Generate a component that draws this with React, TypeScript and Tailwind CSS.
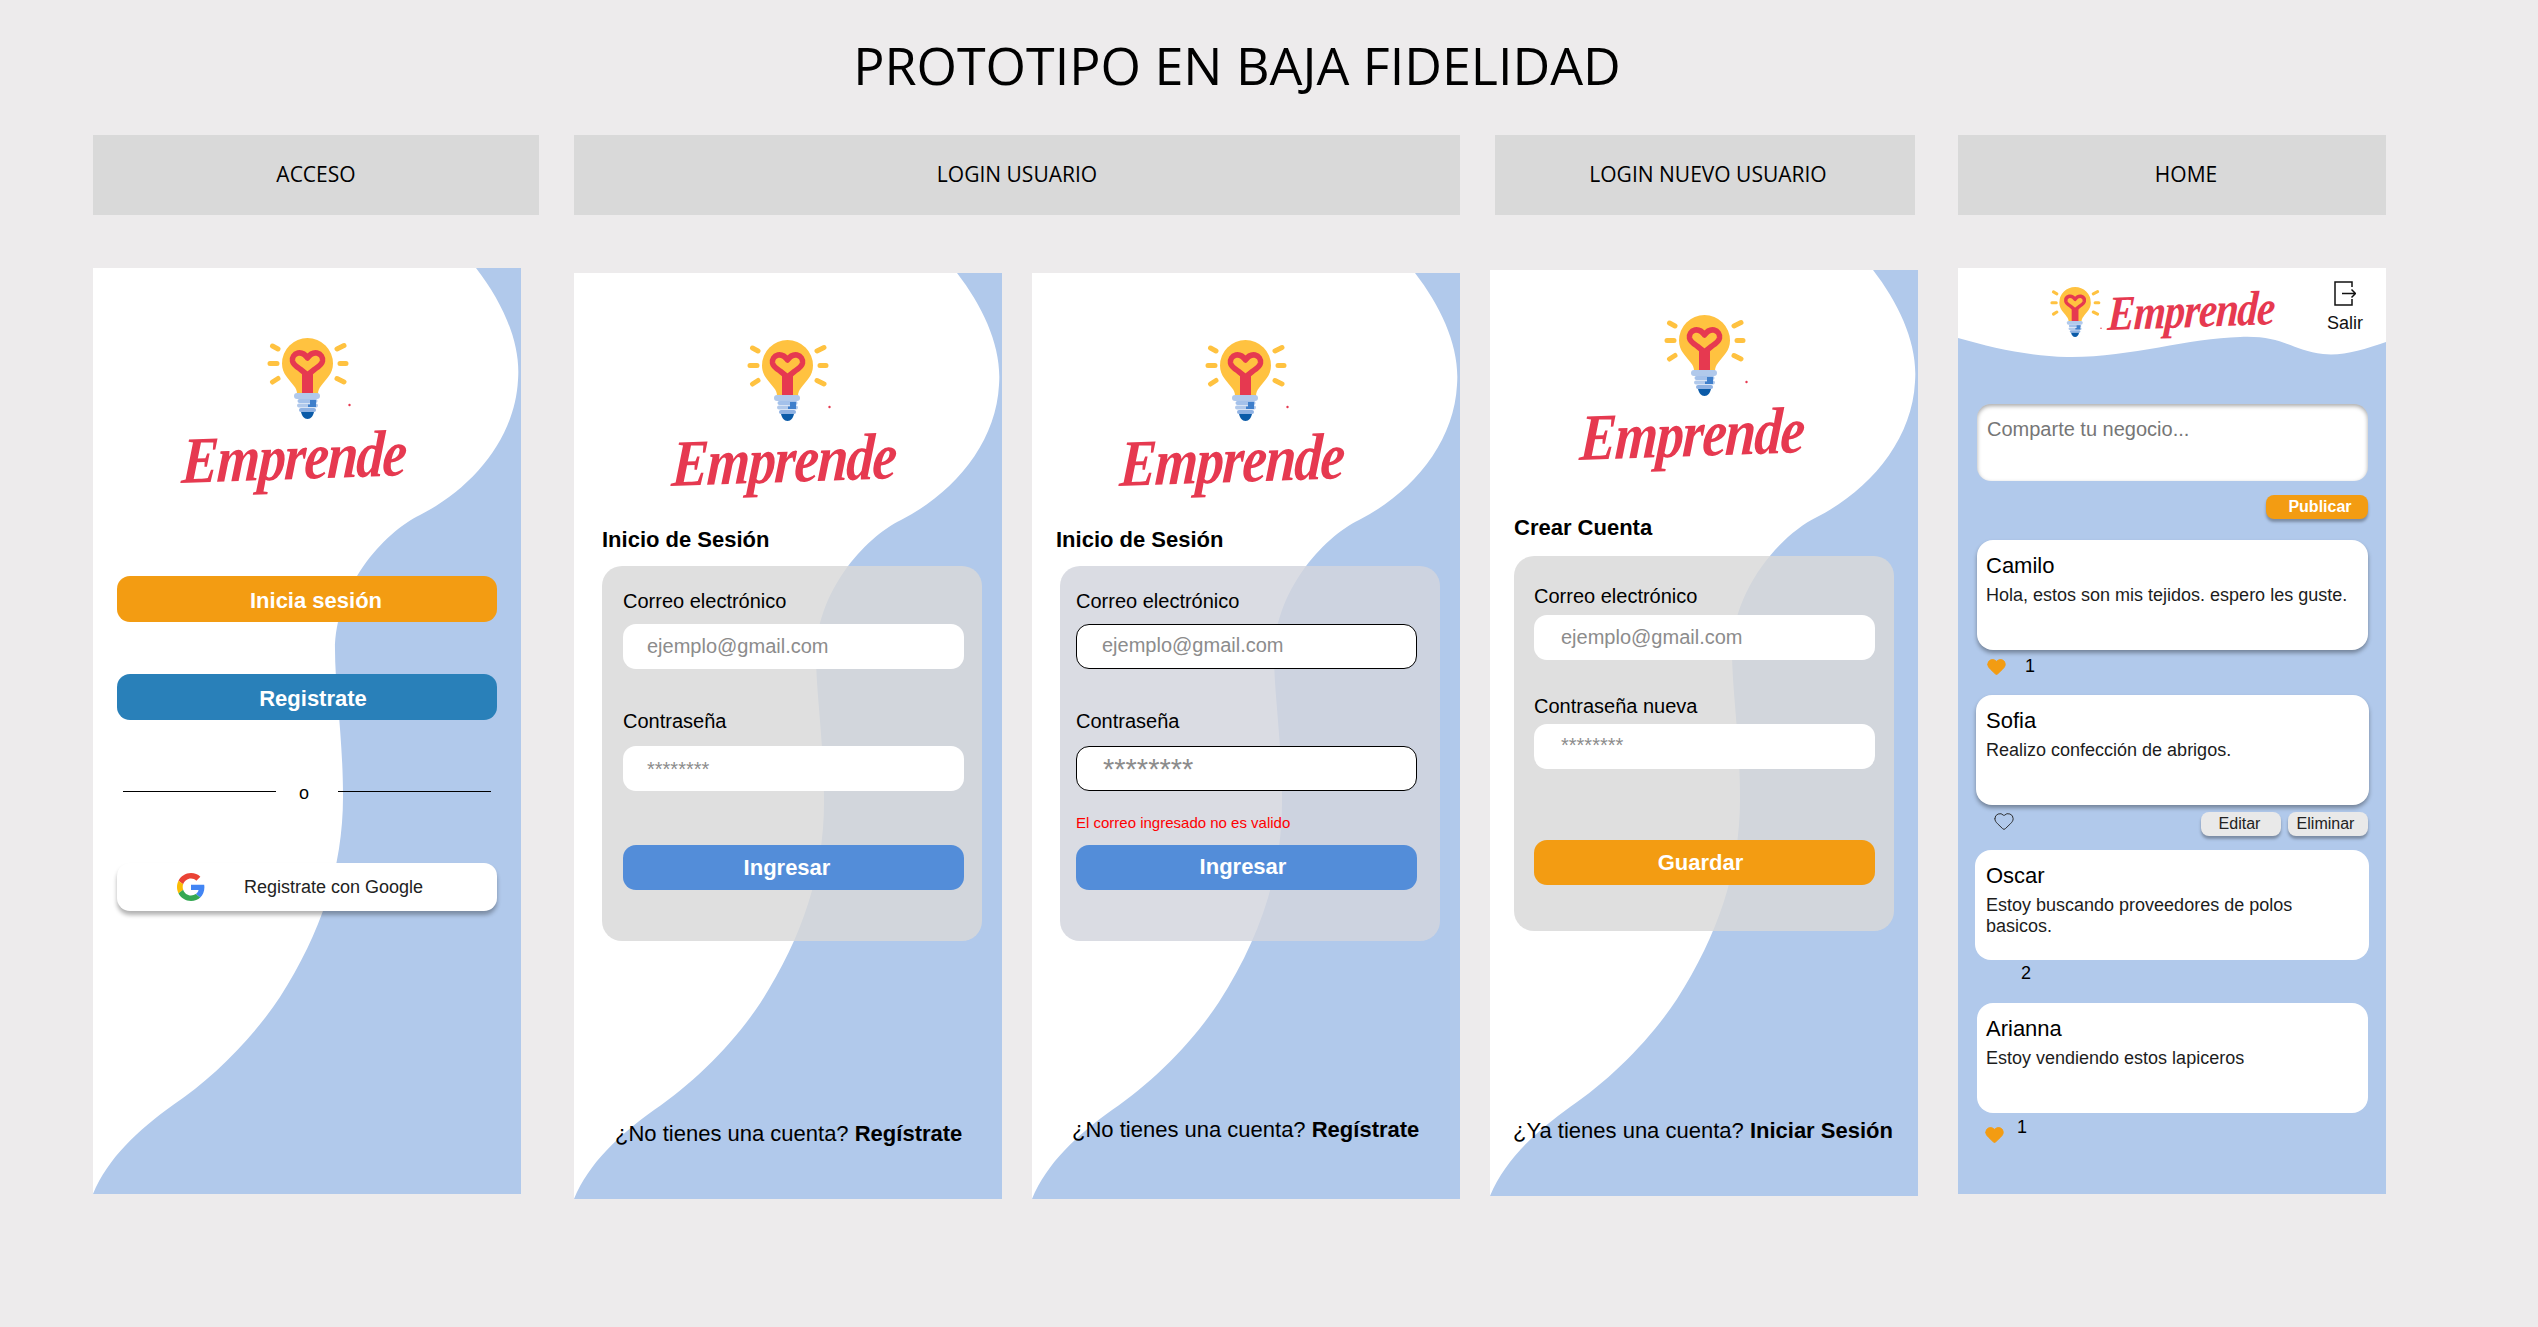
import React from 'react';
import { Heart } from 'lucide-react';

const Wave: React.FC = () => (
    <svg className="absolute inset-0" width="428" height="926" viewBox="0 0 428 926">
        <path fill="#ffffff" d="M0 0H383C410 35 428 75 425 112C422 170 380 220 327 247C290 265 242 320 242 382C242 420 250 470 250 529C250 600 228 665 187 729C160 770 120 810 80 837C45 862 15 890 0 926Z" />
    </svg>
);

const Bulb: React.FC<{ className?: string }> = ({ className }) => (
    <svg className={className} viewBox="0 0 84 81" fill="none">
        <g stroke="#ffc240" strokeWidth="5" strokeLinecap="round">
            <path d="M3 25.500H10M73 25.500H79M5.500 8L11 11M70 11L77 7.500M5.500 44L11 40.500M70 40.500L77 44" />
        </g>
        <path fill="#ffc240" d="M40.500 0A25.500 25.500 0 0 1 66 25.500C66 36 59 41 54 48C52 50 51 53 51 56H30C30 53 29 50 27 48C22 41 15 36 15 25.500A25.500 25.500 0 0 1 40.500 0Z" />
        <path stroke="#e63950" strokeWidth="5.500" strokeLinejoin="round" d="M40.500 20C37.500 15.500 34 14.500 31 15C27 16 25 19.500 25.500 23C26 26 29 28.500 33 31L40.500 37L48 31C52 28.500 55 26 55.500 23C56 19.500 54 16 50 15C47 14.500 43.500 15.500 40.500 20Z" />
        <path fill="#e63950" d="M35 35H46V56H35Z" />
        <rect x="27" y="55" width="26" height="6" rx="3" fill="#b1c9eb" />
        <rect x="30.500" y="61" width="20" height="4" rx="2" fill="#a4c1ea" />
        <rect x="30" y="65.500" width="21" height="4" rx="2" fill="#b1c9eb" />
        <rect x="32" y="70" width="17" height="4" rx="2" fill="#8fb2e3" />
        <path fill="#3f7fcb" d="M43 62H49V69H41V66.500H43Z" />
        <path fill="#0b5ba8" d="M34 74H47C46 78 44 81 40.500 81C37 81 35 78 34 74Z" />
        <circle cx="82.500" cy="67" r="1.200" fill="#e63950" />
    </svg>
);

const Word: React.FC<{ className: string }> = ({ className }) => (
    <div className={`font-['Liberation_Serif',serif] font-bold italic text-[#e63950] whitespace-nowrap origin-left scale-x-[0.84] -rotate-2 -skew-x-6 tracking-[-0.03em] ${className}`}>
        Emprende
    </div>
);

const Phone: React.FC<{ className: string; wave?: boolean; children: React.ReactNode }> = ({ className, wave = true, children }) => (
    <div className={`relative w-[428px] h-[926px] shrink-0 overflow-hidden bg-[#b1c9eb] ${className}`}>
        {wave && <Wave />}
        <div className="relative flex flex-col">{children}</div>
    </div>
);

const Input: React.FC<{ value: string; className: string }> = ({ value, className }) => (
    <div className={`w-[341px] h-[45px] flex items-center bg-white rounded-[13px] text-[#8c8c8c] ${className}`}>{value}</div>
);

const Post: React.FC<{ name: string; className: string; lines: string[] }> = ({ name, className, lines }) => (
    <div className={`h-[110px] bg-white rounded-[16px] pt-[13px] ${className}`}>
        <div className="text-[22px] leading-[26px] text-black">{name}</div>
        <div className="mt-[6px] text-[18px] leading-[21px] text-[#1c1c1c]">
            {lines.map(l => <div key={l}>{l}</div>)}
        </div>
    </div>
);

const SmallButton: React.FC<{ label: string; className?: string }> = ({ label, className }) => (
    <div className={`w-[80px] h-[24px] flex items-center justify-center bg-[#e9e9e9] rounded-[8px] text-[16px] text-[#222] shadow-[0_3px_3px_rgba(0,0,0,0.3)] ${className ?? ''}`}>{label}</div>
);

const App: React.FC = () => {
    return (
        <div className="w-[2538px] h-[1327px] overflow-hidden bg-[#edebec] font-['Liberation_Sans',sans-serif] text-black">
            <h1 className="pt-[35px] h-[135px] pr-[64px] text-center font-['Open_Sans',sans-serif] text-[52px] leading-[60px] font-normal">
                PROTOTIPO EN BAJA FIDELIDAD
            </h1>

            <div className="flex pl-[93px] font-['Open_Sans',sans-serif] text-[21px]">
                <div className="w-[446px] h-[80px] flex items-center justify-center bg-[#d9d9d9]">ACCESO</div>
                <div className="ml-[35px] w-[886px] h-[80px] flex items-center justify-center bg-[#d9d9d9]">LOGIN USUARIO</div>
                <div className="ml-[35px] w-[420px] h-[80px] flex items-center justify-center pl-[6px] bg-[#d9d9d9]">LOGIN NUEVO USUARIO</div>
                <div className="ml-[43px] w-[428px] h-[80px] flex items-center justify-center pl-[28px] bg-[#d9d9d9]">HOME</div>
            </div>

            <div className="flex items-start pl-[93px] mt-[53px]">
                {/* acceso */}
                <Phone className="">
                    <Bulb className="ml-[174px] mt-[70px] w-[84px] h-[81px]" />
                    <Word className="ml-[89px] mt-[8px] w-[225px] h-[67px] text-[66px] leading-[68px]" />
                    <div className="ml-[24px] mt-[82px] w-[380px] h-[46px] flex items-center justify-center pl-[18px] pt-[2px] bg-[#f39c12] rounded-[13px] text-white font-bold text-[22px]">Inicia sesión</div>
                    <div className="ml-[24px] mt-[52px] w-[380px] h-[46px] flex items-center justify-center pl-[12px] pt-[2px] bg-[#2980b9] rounded-[13px] text-white font-bold text-[22px]">Registrate</div>
                    <div className="ml-[30px] mt-[61px] w-[368px] h-[20px] flex items-center">
                        <div className="w-[153px] h-px bg-black" />
                        <div className="w-[62px] pr-[6px] text-center text-[18px] leading-[20px] pt-[3px]">o</div>
                        <div className="w-[153px] h-px bg-black" />
                    </div>
                    <div className="ml-[24px] mt-[62px] w-[380px] h-[48px] flex items-center pl-[60px] bg-white rounded-[13px] shadow-[0_4px_4px_rgba(0,0,0,0.3)]">
                        <svg width="28" height="28" viewBox="0 0 48 48">
                            <path fill="#EA4335" d="M24 9.500c3.540 0 6.710 1.220 9.210 3.600l6.850-6.850C35.900 2.380 30.470 0 24 0 14.620 0 6.510 5.380 2.560 13.220l7.980 6.190C12.430 13.720 17.740 9.500 24 9.500z" />
                            <path fill="#4285F4" d="M46.980 24.550c0-1.570-.15-3.090-.38-4.550H24v9.020h12.940c-.58 2.960-2.260 5.480-4.780 7.180l7.730 6c4.510-4.180 7.090-10.360 7.090-17.650z" />
                            <path fill="#FBBC05" d="M10.530 28.590c-.5-1.450-.78-2.990-.78-4.590s.27-3.140.78-4.590l-7.980-6.190C.92 16.460 0 20.120 0 24c0 3.880.92 7.540 2.560 10.780l7.970-6.190z" />
                            <path fill="#34A853" d="M24 48c6.480 0 11.930-2.130 15.890-5.810l-7.730-6c-2.150 1.450-4.920 2.300-8.160 2.300-6.260 0-11.570-4.220-13.470-9.910l-7.980 6.190C6.510 42.620 14.620 48 24 48z" />
                        </svg>
                        <span className="ml-[39px] text-[18px] text-[#222]">Registrate con Google</span>
                    </div>
                </Phone>

                {/* login usuario */}
                <Phone className="ml-[53px] mt-[5px]">
                    <Bulb className="ml-[173px] mt-[67px] w-[84px] h-[81px]" />
                    <Word className="ml-[98px] mt-[9px] w-[225px] h-[67px] text-[66px] leading-[68px]" />
                    <div className="ml-[28px] mt-[29px] h-[28px] text-[22px] leading-[28px] font-bold">Inicio de Sesión</div>
                    <div className="ml-[28px] mt-[12px] w-[380px] h-[375px] rounded-[20px] bg-[#d9d9d9]/[.83] pl-[21px] pt-[23px]">
                        <div className="h-[24px] text-[20px] leading-[24px]">Correo electrónico</div>
                        <Input value="ejemplo@gmail.com" className="mt-[11px] pl-[24px] pb-[2px] text-[20px]" />
                        <div className="mt-[40px] h-[24px] text-[20px] leading-[24px]">Contraseña</div>
                        <Input value="********" className="mt-[13px] pl-[24px] text-[20px]" />
                        <div className="mt-[54px] w-[341px] h-[45px] flex items-center justify-center pb-[1px] pr-[13px] bg-[#538dd9] rounded-[13px] text-white font-bold text-[22px]">Ingresar</div>
                    </div>
                    <div className="ml-[41px] mt-[178px] h-[30px] text-[22px] leading-[30px] whitespace-nowrap">¿No tienes una cuenta? <b>Regístrate</b></div>
                </Phone>

                <Phone className="ml-[30px] mt-[5px]">
                    <Bulb className="ml-[173px] mt-[67px] w-[84px] h-[81px]" />
                    <Word className="ml-[88px] mt-[9px] w-[225px] h-[67px] text-[66px] leading-[68px]" />
                    <div className="ml-[24px] mt-[29px] h-[28px] text-[22px] leading-[28px] font-bold">Inicio de Sesión</div>
                    <div className="ml-[28px] mt-[12px] w-[380px] h-[375px] rounded-[20px] bg-[#d2d5dd]/[.83] pl-[16px] pt-[23px]">
                        <div className="h-[24px] text-[20px] leading-[24px]">Correo electrónico</div>
                        <Input value="ejemplo@gmail.com" className="mt-[11px] pl-[25px] pb-[3px] text-[20px] border border-black" />
                        <div className="mt-[40px] h-[24px] text-[20px] leading-[24px]">Contraseña</div>
                        <Input value="********" className="mt-[13px] pl-[26px] pt-[2px] text-[29px] border border-black" />
                        <div className="mt-[22px] h-[20px] text-[15px] leading-[20px] text-[#ff0000]">El correo ingresado no es valido</div>
                        <div className="mt-[12px] w-[341px] h-[45px] flex items-center justify-center pb-[2px] pr-[7px] bg-[#538dd9] rounded-[13px] text-white font-bold text-[22px]">Ingresar</div>
                    </div>
                    <div className="ml-[40px] mt-[174px] h-[30px] text-[22px] leading-[30px] whitespace-nowrap">¿No tienes una cuenta? <b>Regístrate</b></div>
                </Phone>

                {/* login nuevo usuario */}
                <Phone className="ml-[30px] mt-[2px]">
                    <Bulb className="ml-[174px] mt-[45px] w-[84px] h-[81px]" />
                    <Word className="ml-[90px] mt-[8px] w-[225px] h-[66px] text-[66px] leading-[67px]" />
                    <div className="ml-[24px] mt-[44px] h-[28px] text-[22px] leading-[28px] font-bold">Crear Cuenta</div>
                    <div className="ml-[24px] mt-[14px] w-[380px] h-[375px] rounded-[20px] bg-[#d9d9d9]/[.83] pl-[20px] pt-[28px]">
                        <div className="h-[24px] text-[20px] leading-[24px]">Correo electrónico</div>
                        <Input value="ejemplo@gmail.com" className="mt-[7px] pl-[27px] pb-[2px] text-[20px]" />
                        <div className="mt-[34px] h-[24px] text-[20px] leading-[24px]">Contraseña nueva</div>
                        <Input value="********" className="mt-[6px] pl-[27px] pb-[4px] text-[20px]" />
                        <div className="mt-[71px] w-[341px] h-[45px] flex items-center justify-center pr-[8px] bg-[#f39c12] rounded-[13px] text-white font-bold text-[22px]">Guardar</div>
                    </div>
                    <div className="ml-[23px] mt-[185px] h-[30px] text-[22px] leading-[30px] whitespace-nowrap">¿Ya tienes una cuenta? <b>Iniciar Sesión</b></div>
                </Phone>

                {/* home */}
                <Phone className="ml-[40px]" wave={false}>
                    <svg className="absolute inset-x-0 top-0" width="428" height="92" viewBox="0 0 428 92">
                        <path fill="#ffffff" d="M0 0H428V74C405 82 385 88 365 86C335 83 325 67 282 69C230 70 170 90 109 89C70 88 35 80 0 70Z" />
                    </svg>
                    <div className="relative flex items-start h-[66px] pl-[92px] pt-[13px]">
                        <Bulb className="mt-[6px] w-[52px] h-[50px]" />
                        <Word className="ml-[6px] mt-[8px] w-[163px] h-[48px] text-[49px] leading-[50px]" />
                        <div className="ml-[44px] w-[60px] flex flex-col items-center">
                            <svg width="22" height="25" viewBox="0 0 22 25" fill="none" stroke="#111" strokeWidth="1.500">
                                <path d="M18 6V1H1V24H18V18M8 12.500H21.500M17.500 8.500L21.500 12.500L17.500 16.500" />
                            </svg>
                            <div className="mt-[6px] h-[22px] text-[18px] leading-[22px] text-[#111]">Salir</div>
                        </div>
                    </div>
                    <div className="relative ml-[19px] mt-[70px] w-[391px] h-[77px] bg-white rounded-[14px] pl-[10px] pt-[13px] text-[20px] leading-[24px] text-[#767676] shadow-[inset_0_2px_4px_rgba(0,0,0,0.35)]">Comparte tu negocio...</div>
                    <div className="relative ml-[308px] mt-[14px] w-[102px] h-[24px] flex items-center justify-center pl-[6px] bg-[#f39c12] rounded-[8px] text-white font-bold text-[16px] shadow-[0_3px_3px_rgba(0,0,0,0.3)]">Publicar</div>

                    <Post name="Camilo" lines={['Hola, estos son mis tejidos. espero les guste.']} className="relative ml-[19px] mt-[21px] w-[391px] pl-[9px] shadow-[0_3px_4px_rgba(0,0,0,0.35)]" />
                    <div className="relative flex items-start h-[45px] pl-[28px] pt-[6px]">
                        <Heart size={21} fill="#f39c12" stroke="#f39c12" strokeWidth={1} />
                        <div className="ml-[18px] h-[20px] text-[18px] leading-[20px]">1</div>
                    </div>

                    <Post name="Sofia" lines={['Realizo confección de abrigos.']} className="relative ml-[18px] w-[393px] pl-[10px] shadow-[0_3px_4px_rgba(0,0,0,0.35)]" />
                    <div className="relative flex items-start h-[45px] pl-[35px] pt-[5px]">
                        <Heart size={22} stroke="#222" strokeWidth={1} fill="none" />
                        <SmallButton label="Editar" className="ml-[186px] mt-[2px] pr-[3px]" />
                        <SmallButton label="Eliminar" className="ml-[7px] mt-[2px] pr-[5px]" />
                    </div>

                    <Post name="Oscar" lines={['Estoy buscando proveedores de polos', 'basicos.']} className="relative ml-[17px] w-[394px] pl-[11px]" />
                    <div className="relative h-[43px] pl-[63px] pt-[3px] text-[18px] leading-[20px]">2</div>

                    <Post name="Arianna" lines={['Estoy vendiendo estos lapiceros']} className="relative ml-[19px] w-[391px] pl-[9px]" />
                    <div className="relative flex items-start pl-[26px]">
                        <Heart size={21} fill="#f39c12" stroke="#f39c12" strokeWidth={1} className="mt-[11px]" />
                        <div className="ml-[12px] mt-[4px] h-[20px] text-[18px] leading-[20px]">1</div>
                    </div>
                </Phone>
            </div>
        </div>
    );
};

export default App;
